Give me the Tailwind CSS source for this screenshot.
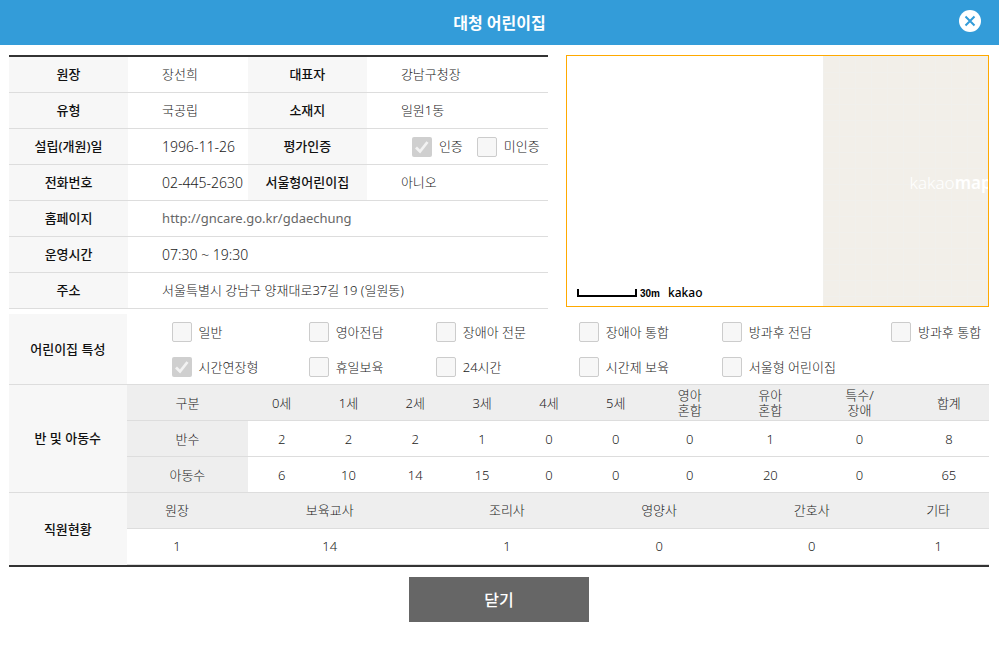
<!DOCTYPE html>
<html lang="ko">
<head>
<meta charset="utf-8">
<meta name="viewport" content="width=device-width, initial-scale=1">
<title>대청 어린이집</title>
<script src="https://cdn.jsdelivr.net/npm/@tailwindcss/browser@4"></script>
</head>
<body class="bg-white font-['Noto_Sans','Noto_Sans_CJK_KR',sans-serif] text-[13px] leading-[15px] font-light text-[#222]">
<header class="relative flex h-[45px] items-center justify-center bg-[#339cd9]">
  <h1 class="text-base font-bold text-white">대청 어린이집</h1>
  <button type="button" aria-label="닫기" class="absolute top-[10px] right-[18px] size-[22px]">
    <svg viewBox="0 0 22 22" class="size-full"><circle cx="11" cy="11" r="11" fill="#fff"/><path d="M6.5 6.5l9 9M15.5 6.5l-9 9" stroke="#339cd9" stroke-width="2" fill="none"/></svg>
  </button>
</header>

<main class="pt-[10px] pr-[10px] pl-[9px]">
  <div class="grid grid-cols-[539fr_423fr] items-start gap-[18px]">
    <table class="w-full table-fixed border-separate border-spacing-0 border-t-2 border-[#333] [&_td]:h-9 [&_td]:border-b [&_td]:border-[#ddd] [&_td]:pl-[34px] [&_td]:whitespace-nowrap [&_th]:h-9 [&_th]:border-b [&_th]:border-[#ddd] [&_th]:bg-[#f7f7f7] [&_th]:font-medium [&_th]:whitespace-nowrap [&_th]:text-[#111]">
      <colgroup><col class="w-[22.1%]"><col class="w-[22.2%]"><col class="w-[22.1%]"><col class="w-[33.6%]"></colgroup>
      <tbody>
      <tr><th scope="row">원장</th><td>장선희</td><th scope="row">대표자</th><td>강남구청장</td></tr>
      <tr><th scope="row">유형</th><td>국공립</td><th scope="row">소재지</th><td>일원1동</td></tr>
      <tr><th scope="row">설립(개원)일</th><td class="text-sm leading-[15px]">1996-11-26</td><th scope="row">평가인증</th>
        <td>
          <div class="flex gap-[14px] pl-[11px]">
            <label class="flex items-center gap-[7px]"><span class="relative size-5"><input type="checkbox" checked disabled class="block size-5 appearance-none rounded-xs bg-[#cfcfcf]"><svg viewBox="0 0 20 20" class="absolute inset-0"><path d="M4 10.5l4 4L15.5 5" stroke="#f2f2f2" stroke-width="2.8" fill="none"/></svg></span>인증</label>
            <label class="flex items-center gap-[7px]"><input type="checkbox" disabled class="size-5 appearance-none rounded-xs border border-[#ccc] bg-[#f7f7f7]">미인증</label>
          </div>
        </td></tr>
      <tr><th scope="row">전화번호</th><td class="text-sm leading-[15px]">02-445-2630</td><th scope="row">서울형어린이집</th><td>아니오</td></tr>
      <tr><th scope="row">홈페이지</th><td colspan="3"><a href="http://gncare.go.kr/gdaechung" class="font-normal text-[#666]">http://gncare.go.kr/gdaechung</a></td></tr>
      <tr><th scope="row">운영시간</th><td colspan="3" class="text-sm leading-[15px]">07:30 ~ 19:30</td></tr>
      <tr><th scope="row">주소</th><td colspan="3">서울특별시 강남구 양재대로37길 19 (일원동)</td></tr>
      </tbody>
    </table>

    <section aria-label="지도" class="relative flex h-[252px] justify-end overflow-hidden border border-[#ffa900]">
      <div class="flex w-[39.3%] items-center bg-[#f2efe9] bg-[linear-gradient(to_right,#f1f0ec_1px,transparent_1px),linear-gradient(to_bottom,#f1f0ec_1px,transparent_1px)] bg-size-[16px_16px] pl-[87px]">
        <div class="pt-1 text-[17px] leading-5 font-light whitespace-nowrap text-white">kakao<b class="font-semibold">map</b></div>
      </div>
      <div class="absolute bottom-[5px] left-[10px] flex items-end text-black">
        <span class="mb-1 h-2 w-[60px] border-2 border-t-0 border-black"></span>
        <span class="ml-[3px] font-['Liberation_Sans',sans-serif] text-[10px] leading-[14px] font-bold">30m</span>
        <span class="ml-2 text-xs leading-4 font-medium">kakao</span>
      </div>
    </section>
  </div>

  <div class="mt-[5px] border-b-2 border-[#333]">
    <section class="flex border-b border-[#ddd]">
      <h2 class="flex w-[12%] shrink-0 items-center justify-center bg-[#f7f7f7] pt-px font-medium text-[#111]">어린이집 특성</h2>
      <div class="grid flex-1 grid-cols-[137fr_127fr_143fr_143fr_169fr_98fr] gap-y-[15px] pt-2 pb-[7px] pl-[45px] whitespace-nowrap">
        <label class="flex items-center gap-[7px]"><input type="checkbox" disabled class="size-5 appearance-none rounded-xs border border-[#ccc] bg-[#f7f7f7]">일반</label>
        <label class="flex items-center gap-[7px]"><input type="checkbox" disabled class="size-5 appearance-none rounded-xs border border-[#ccc] bg-[#f7f7f7]">영아전담</label>
        <label class="flex items-center gap-[7px]"><input type="checkbox" disabled class="size-5 appearance-none rounded-xs border border-[#ccc] bg-[#f7f7f7]">장애아 전문</label>
        <label class="flex items-center gap-[7px]"><input type="checkbox" disabled class="size-5 appearance-none rounded-xs border border-[#ccc] bg-[#f7f7f7]">장애아 통합</label>
        <label class="flex items-center gap-[7px]"><input type="checkbox" disabled class="size-5 appearance-none rounded-xs border border-[#ccc] bg-[#f7f7f7]">방과후 전담</label>
        <label class="flex items-center gap-[7px]"><input type="checkbox" disabled class="size-5 appearance-none rounded-xs border border-[#ccc] bg-[#f7f7f7]">방과후 통합</label>
        <label class="flex items-center gap-[7px]"><span class="relative size-5"><input type="checkbox" checked disabled class="block size-5 appearance-none rounded-xs bg-[#cfcfcf]"><svg viewBox="0 0 20 20" class="absolute inset-0"><path d="M4 10.5l4 4L15.5 5" stroke="#f2f2f2" stroke-width="2.8" fill="none"/></svg></span>시간연장형</label>
        <label class="flex items-center gap-[7px]"><input type="checkbox" disabled class="size-5 appearance-none rounded-xs border border-[#ccc] bg-[#f7f7f7]">휴일보육</label>
        <label class="flex items-center gap-[7px]"><input type="checkbox" disabled class="size-5 appearance-none rounded-xs border border-[#ccc] bg-[#f7f7f7]">24시간</label>
        <label class="flex items-center gap-[7px]"><input type="checkbox" disabled class="size-5 appearance-none rounded-xs border border-[#ccc] bg-[#f7f7f7]">시간제 보육</label>
        <label class="flex items-center gap-[7px]"><input type="checkbox" disabled class="size-5 appearance-none rounded-xs border border-[#ccc] bg-[#f7f7f7]">서울형 어린이집</label>
      </div>
    </section>

    <section class="flex">
      <h2 class="flex w-[12%] shrink-0 items-center justify-center border-b border-[#ddd] bg-[#f7f7f7] font-medium text-[#111]">반 및 아동수</h2>
      <table class="flex-1 table-fixed border-separate border-spacing-0 text-center [&_td]:h-9 [&_td]:border-b [&_td]:border-[#ddd] [&_td]:pt-px [&_th]:h-9 [&_th]:border-b [&_th]:border-[#ddd] [&_th]:bg-[#eee] [&_th]:pt-px [&_th]:font-light">
        <colgroup><col class="w-[14.1%]"><col class="w-[7.75%]"><col class="w-[7.75%]"><col class="w-[7.75%]"><col class="w-[7.75%]"><col class="w-[7.75%]"><col class="w-[7.75%]"><col class="w-[9.4%]"><col class="w-[9.3%]"><col class="w-[11.4%]"><col class="w-[9.3%]"></colgroup>
        <thead><tr><th scope="col">구분</th><th scope="col">0세</th><th scope="col">1세</th><th scope="col">2세</th><th scope="col">3세</th><th scope="col">4세</th><th scope="col">5세</th><th scope="col">영아<br>혼합</th><th scope="col">유아<br>혼합</th><th scope="col">특수/<br>장애</th><th scope="col">합계</th></tr></thead>
        <tbody>
        <tr><th scope="row">반수</th><td>2</td><td>2</td><td>2</td><td>1</td><td>0</td><td>0</td><td>0</td><td>1</td><td>0</td><td>8</td></tr>
        <tr><th scope="row">아동수</th><td>6</td><td>10</td><td>14</td><td>15</td><td>0</td><td>0</td><td>0</td><td>20</td><td>0</td><td>65</td></tr>
        </tbody>
      </table>
    </section>

    <section class="flex">
      <h2 class="flex w-[12%] shrink-0 items-center justify-center bg-[#f7f7f7] pt-px font-medium text-[#111]">직원현황</h2>
      <table class="flex-1 table-fixed border-separate border-spacing-0 text-center [&_td]:h-9 [&_td]:border-b [&_td]:border-[#ddd] [&_th]:h-9 [&_th]:border-b [&_th]:border-[#ddd] [&_th]:bg-[#eee] [&_th]:font-light">
        <colgroup><col class="w-[11.7%]"><col class="w-[23.7%]"><col class="w-[17.4%]"><col class="w-[17.9%]"><col class="w-[17.5%]"><col class="w-[11.8%]"></colgroup>
        <thead><tr><th scope="col">원장</th><th scope="col">보육교사</th><th scope="col">조리사</th><th scope="col">영양사</th><th scope="col">간호사</th><th scope="col">기타</th></tr></thead>
        <tbody><tr><td>1</td><td>14</td><td>1</td><td>0</td><td>0</td><td>1</td></tr></tbody>
      </table>
    </section>
  </div>

  <div class="flex justify-center pt-[10px] pb-9">
    <button type="button" class="h-[45px] w-[180px] bg-[#666] text-base font-medium text-white">닫기</button>
  </div>
</main>
</body>
</html>
